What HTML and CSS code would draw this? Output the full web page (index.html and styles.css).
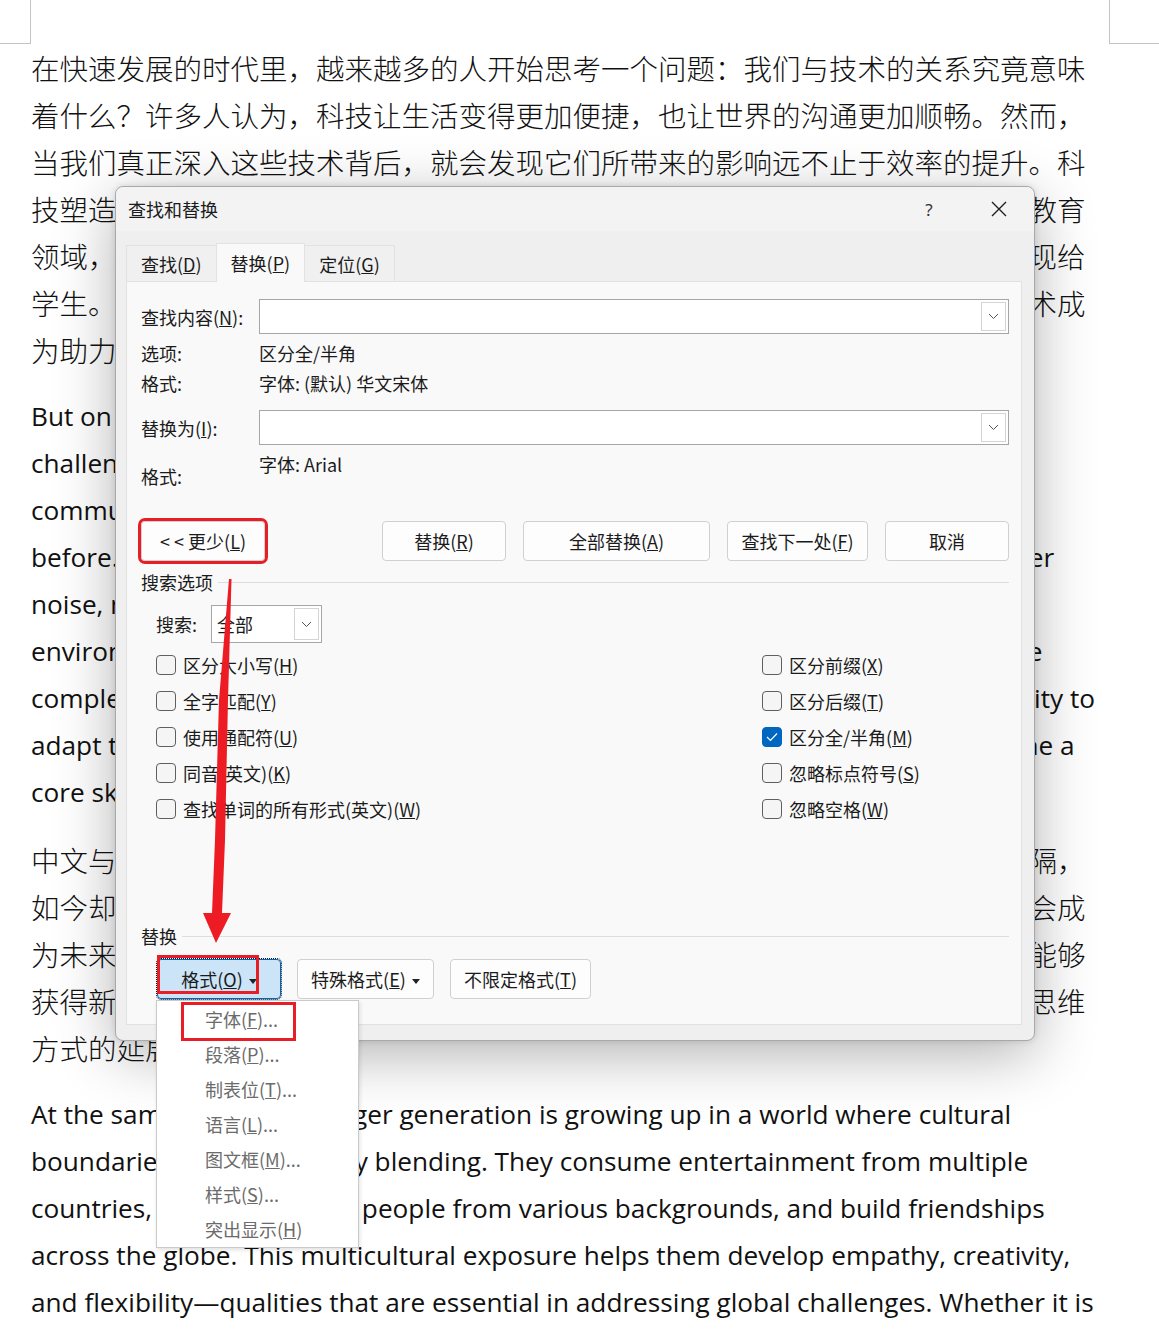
FILE: index.html
```html
<!DOCTYPE html>
<html lang="zh-CN">
<head>
  <meta charset="UTF-8" />
  <title>查找和替换</title>
  <link rel="stylesheet" href="styles.css">
</head>
<body>
  <div class="page">
    <div class="corners">
      <span class="corner corner-l"></span>
      <span class="corner corner-r"></span>
    </div>

    <div class="doc">
      <p class="cn">在快速发展的时代里，越来越多的人开始思考一个问题：我们与技术的关系究竟意味<br>着什么？许多人认为，科技让生活变得更加便捷，也让世界的沟通更加顺畅。然而，<br>当我们真正深入这些技术背后，就会发现它们所带来的影响远不止于效率的提升。科<br>技塑造了我们的思维方式，也在潜移默化之中改变着人与人之间的互动模式。在教育<br>领域，在线学习平台让知识的获取变得更容易，教师能用更生动的方式把内容呈现给<br>学生。与此同时，医疗、交通、金融等行业也在不断地探索与尝试，各类新兴技术成<br>为助力社会发展的重要力量。</p>
      <p class="en">But on the other hand, the rapid spread of digital tools has brought<br>challenges that earlier generations never had to face. People are<br>communication often feels harder to achieve, and news moves faster<br>before. Many of us struggle to keep focused, continually distracted by online chatter<br>noise, notifications, and an endless stream of information. In such an<br>environment, it becomes truly essential to learn how to filter noise and balance the<br>complexity of modern living. Those who succeed in the future will cultivate the ability to<br>adapt to change quickly and also think critically, qualities that will continue to define a<br>core skill for the next generation of learners.</p>
      <p class="cn">中文与英文曾经被视为两种截然不同的语言体系，彼此之间存在着难以跨越的阻隔，<br>如今却因为全球化与互联网的发展而逐渐融合，掌握双语能力的人往往也更有机会成<br>为未来社会的佼佼者。语言不仅是交流的工具，更是一扇通往崭新世界的窗口，能够<br>获得新的视角与认知，帮助我们更加深入地去理解不同文化背景之下人们独特的思维<br>方式的延展与变化。</p>
      <p class="en">At the same time the younger generation is growing up in a world where cultural<br>boundaries are increasingly blending. They consume entertainment from multiple<br>countries, collaborate with people from various backgrounds, and build friendships<br>across the globe. This multicultural exposure helps them develop empathy, creativity,<br>and flexibility—qualities that are essential in addressing global challenges. Whether it is</p>
    </div>

    <div class="dialog">
      <div class="titlebar">
        <span class="title">查找和替换</span>
        <span class="tb-btn tb-help">?</span>
        <span class="tb-btn">
          <svg width="16" height="16" viewBox="0 0 16 16"><path d="M1 1 L15 15 M15 1 L1 15" stroke="#1f1f1f" stroke-width="1.4" fill="none"/></svg>
        </span>
      </div>

      <div class="tabs">
        <span class="tab">查找(<u>D</u>)</span>
        <span class="tab active">替换(<u>P</u>)</span>
        <span class="tab">定位(<u>G</u>)</span>
      </div>

      <div class="panel">
        <div class="field-row">
          <span class="field-label">查找内容(<u>N</u>):</span>
          <div class="combo">
            <span class="combo-btn"><svg width="11" height="7" viewBox="0 0 11 7"><path d="M1 1 L5.5 5.5 L10 1" stroke="#555" fill="none"/></svg></span>
          </div>
        </div>
        <div class="info-row info-first">
          <span class="field-label">选项:</span>
          <span>区分全/半角</span>
        </div>
        <div class="info-row">
          <span class="field-label">格式:</span>
          <span>字体: (默认) 华文宋体</span>
        </div>

        <div class="field-row replace-row">
          <span class="field-label">替换为(<u>I</u>):</span>
          <div class="combo">
            <span class="combo-btn"><svg width="11" height="7" viewBox="0 0 11 7"><path d="M1 1 L5.5 5.5 L10 1" stroke="#555" fill="none"/></svg></span>
          </div>
        </div>
        <div class="info-row info-format">
          <span class="field-label">格式:</span>
          <span>字体: Arial</span>
        </div>

        <div class="btn-row">
          <button class="btn btn-more">&lt; &lt; 更少(<u>L</u>)</button>
          <div class="btn-group">
            <button class="btn btn-replace">替换(<u>R</u>)</button>
            <button class="btn btn-all">全部替换(<u>A</u>)</button>
            <button class="btn btn-next">查找下一处(<u>F</u>)</button>
            <button class="btn btn-cancel">取消</button>
          </div>
        </div>

        <div class="legend"><span>搜索选项</span></div>

        <div class="search-row">
          <span class="search-label">搜索:</span>
          <div class="select">
            <span class="select-text">全部</span>
            <span class="combo-btn"><svg width="11" height="7" viewBox="0 0 11 7"><path d="M1 1 L5.5 5.5 L10 1" stroke="#555" fill="none"/></svg></span>
          </div>
        </div>

        <div class="checks">
          <label class="check"><span class="box"></span><span>区分大小写(<u>H</u>)</span></label>
          <label class="check"><span class="box"></span><span>区分前缀(<u>X</u>)</span></label>
          <label class="check"><span class="box"></span><span>全字匹配(<u>Y</u>)</span></label>
          <label class="check"><span class="box"></span><span>区分后缀(<u>T</u>)</span></label>
          <label class="check"><span class="box"></span><span>使用通配符(<u>U</u>)</span></label>
          <label class="check"><span class="box on"><svg width="12" height="10" viewBox="0 0 12 10"><path d="M1 5 L4.5 8.5 L11 1.5" stroke="#fff" stroke-width="1.2" fill="none"/></svg></span><span>区分全/半角(<u>M</u>)</span></label>
          <label class="check"><span class="box"></span><span>同音(英文)(<u>K</u>)</span></label>
          <label class="check"><span class="box"></span><span>忽略标点符号(<u>S</u>)</span></label>
          <label class="check"><span class="box"></span><span>查找单词的所有形式(英文)(<u>W</u>)</span></label>
          <label class="check"><span class="box"></span><span>忽略空格(<u>W</u>)</span></label>
        </div>

        <div class="legend legend-replace"><span>替换</span></div>

        <div class="fmt-row">
          <div class="fmt-wrap">
            <button class="btn btn-fmt">格式(<u>O</u>) <svg class="caret" width="8" height="5" viewBox="0 0 8 5"><path d="M0 0 H8 L4 5 Z" fill="#222"/></svg></button>
            <span class="mark mark-fmt"></span>
            <div class="menu">
              <div class="menu-item">字体(<u>F</u>)...</div>
              <div class="menu-item">段落(<u>P</u>)...</div>
              <div class="menu-item">制表位(<u>T</u>)...</div>
              <div class="menu-item">语言(<u>L</u>)...</div>
              <div class="menu-item">图文框(<u>M</u>)...</div>
              <div class="menu-item">样式(<u>S</u>)...</div>
              <div class="menu-item">突出显示(<u>H</u>)</div>
              <span class="mark mark-menu"></span>
            </div>
          </div>
          <button class="btn btn-special">特殊格式(<u>E</u>) <svg class="caret" width="8" height="5" viewBox="0 0 8 5"><path d="M0 0 H8 L4 5 Z" fill="#222"/></svg></button>
          <button class="btn btn-none">不限定格式(<u>T</u>)</button>
        </div>
      </div>
    </div>

    <!-- annotation arrow -->
    <svg class="arrow" width="1159" height="1337" viewBox="0 0 1159 1337">
      <polygon points="229,579 231.5,579 228,700 225,840 222,913 231,913 216,943 203,913 212,913 215,840 219,700" fill="#ed1c24"/>
    </svg>
  </div>
</body>
</html>
```

FILE: styles.css
```css
* {
  margin: 0;
  padding: 0;
  box-sizing: border-box;
}

body {
  background: #fff;
  overflow: hidden;
  font-family: "Noto Sans CJK SC", sans-serif;
  color: #111;
}

.page {
  position: relative;
  width: 1159px;
  height: 1337px;
  overflow: hidden;
}

/* page corner marks */
.corners {
  display: flex;
  justify-content: space-between;
  height: 44px;
}

.corner {
  border-bottom: 1px solid #c4c4c4;
}

.corner-l {
  width: 31px;
  border-right: 1px solid #c4c4c4;
}

.corner-r {
  width: 50px;
  border-left: 1px solid #c4c4c4;
}

/* document text */
.doc {
  padding-left: 31px;
}

.doc p {
  white-space: nowrap;
  line-height: 47px;
  margin-bottom: 20px;
}

.doc .cn {
  font-size: 28.5px;
  font-weight: 300;
}

.doc .en {
  font-family: "Open Sans", "Noto Sans CJK SC", sans-serif;
  font-size: 26.2px;
}

/* dialog */
.dialog {
  position: absolute;
  left: 115px;
  top: 186px;
  width: 920px;
  height: 855px;
  display: flex;
  flex-direction: column;
  background: #efefef;
  border: 1px solid #a9a9a9;
  border-radius: 8px;
  box-shadow: 0 14px 60px rgba(0, 0, 0, 0.3), 0 0 6px rgba(0, 0, 0, 0.12);
  font-size: 18px;
  color: #1b1b1b;
}

.titlebar {
  flex: none;
  height: 44px;
  display: flex;
  align-items: center;
  padding: 0 12px;
  background: #f3f3f3;
  border-radius: 8px 8px 0 0;
}

.title {
  flex: 1;
}

.tb-btn {
  width: 46px;
  height: 44px;
  display: flex;
  align-items: center;
  justify-content: center;
}

.tb-help {
  margin-right: 24px;
  font-family: "Noto Sans", sans-serif;
  font-size: 17px;
  color: #333;
}

.tabs {
  flex: none;
  display: flex;
  align-items: flex-end;
  height: 38px;
  margin-top: 12px;
  padding-left: 10px;
  position: relative;
  z-index: 1;
}

.tab {
  height: 36px;
  padding: 0 14px;
  display: flex;
  align-items: center;
  background: #f0f0f0;
  border: 1px solid #e2e2e2;
  border-bottom: none;
}

.tab + .tab {
  margin-left: -1px;
}

.tab.active {
  height: 39px;
  margin-bottom: -1px;
  background: #f9f9f9;
  position: relative;
}

.panel {
  flex: 1;
  margin: 0 12px 15px 10px;
  padding: 17px 12px 0 14px;
  background: #f9f9f9;
  border: 1px solid #e1e1e1;
}

.field-row {
  display: flex;
  align-items: center;
}

.field-label {
  width: 118px;
  flex: none;
}

.combo {
  flex: 1;
  height: 35px;
  display: flex;
  justify-content: flex-end;
  padding: 2px;
  background: #fff;
  border: 1px solid #a6a6a6;
}

.combo-btn {
  width: 25px;
  display: flex;
  align-items: center;
  justify-content: center;
  background: #fff;
  border: 1px solid #d4d4d4;
}

.info-row {
  display: flex;
  align-items: center;
  height: 30px;
}

.info-first {
  margin-top: 4px;
}

.replace-row {
  margin-top: 12px;
}

.info-format {
  height: 42px;
  margin-top: 4px;
  align-items: flex-start;
  line-height: 30px;
}

.info-format .field-label {
  margin-top: 12px;
}

/* buttons */
.btn {
  display: block;
  height: 40px;
  font: inherit;
  line-height: 37px;
  color: inherit;
  text-align: center;
  white-space: nowrap;
  background: #fdfdfd;
  border: 1px solid #d0d0d0;
  border-radius: 4px;
}

.btn-row {
  display: flex;
  justify-content: space-between;
  margin-top: 30px;
}

.btn-group {
  display: flex;
  gap: 17px;
}

.btn-more {
  width: 124px;
  outline: 3px solid #e81e26;
}

.btn-replace,
.btn-cancel {
  width: 124px;
}

.btn-all {
  width: 187px;
}

.btn-next {
  width: 141px;
}

.legend {
  display: flex;
  align-items: center;
  height: 30px;
  margin-top: 6px;
}

.legend::after {
  content: "";
  flex: 1;
  height: 1px;
  margin-left: 5px;
  background: #dedede;
}

.legend-replace {
  margin-top: 94px;
}

.search-row {
  display: flex;
  align-items: center;
  margin-top: 8px;
  padding-left: 15px;
}

.search-label {
  width: 55px;
}

.select {
  width: 111px;
  height: 38px;
  display: flex;
  padding: 2px 2px 2px 5px;
  background: #fff;
  border: 1px solid #a6a6a6;
}

.select-text {
  flex: 1;
  display: flex;
  align-items: center;
}

.checks {
  display: grid;
  grid-template-columns: 606px 1fr;
  grid-auto-rows: 36px;
  margin-top: 4px;
  padding-left: 15px;
}

.check {
  display: flex;
  align-items: center;
  gap: 7px;
}

.box {
  width: 20px;
  height: 20px;
  flex: none;
  background: #f5f5f5;
  border: 1px solid #5f5f5f;
  border-radius: 4px;
}

.box.on {
  display: flex;
  align-items: center;
  justify-content: center;
  background: #0067c0;
  border-color: #0067c0;
}

.fmt-row {
  display: flex;
  gap: 16px;
  margin-top: 8px;
  padding-left: 16px;
}

.fmt-wrap {
  position: relative;
}

.btn-fmt {
  width: 124px;
  background: #cce4f7;
  border-color: #0067c0;
  outline: 1px dotted #111;
  outline-offset: 0;
}

.btn-special {
  width: 137px;
}

.btn-none {
  width: 141px;
}

.caret {
  vertical-align: middle;
  margin-left: 2px;
}

/* popup menu */
.menu {
  position: absolute;
  left: -1px;
  top: 41px;
  width: 203px;
  padding-top: 1px;
  background: #fff;
  border: 1px solid #cacaca;
  box-shadow: 1px 2px 4px rgba(0, 0, 0, 0.12);
  color: #6b6b6b;
  z-index: 5;
}

.menu-item {
  line-height: 35px;
  padding-left: 48px;
}

/* red highlight boxes */
.mark {
  position: absolute;
  border: 3px solid #e81e26;
  pointer-events: none;
}

.mark-fmt {
  left: 0;
  top: -4px;
  width: 102px;
  height: 39px;
  z-index: 2;
}

.mark-menu {
  left: 24px;
  top: 1px;
  width: 115px;
  height: 39px;
}

.arrow {
  position: absolute;
  left: 0;
  top: 0;
  pointer-events: none;
  z-index: 20;
}
```
